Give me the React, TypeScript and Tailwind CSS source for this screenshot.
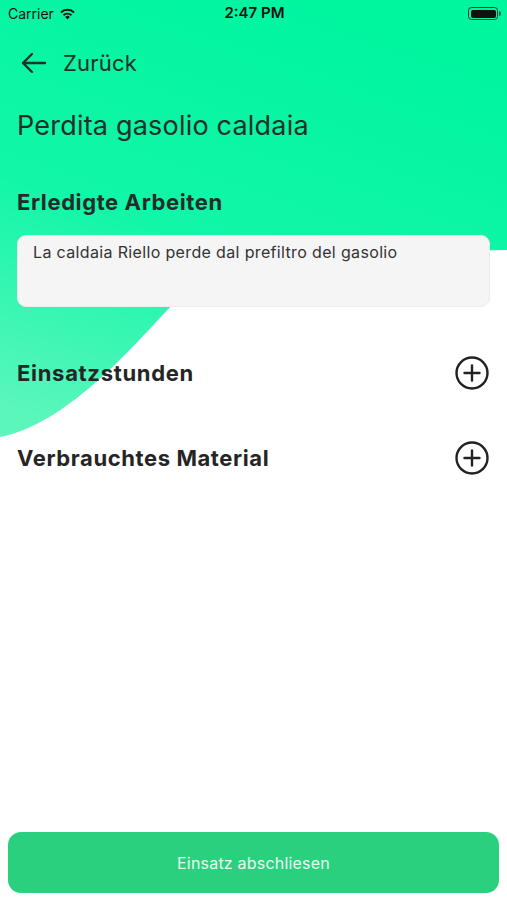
import React from "react";

function PlusCircle() {
  return (
    <svg width="36" height="36" viewBox="0 0 36 36" fill="none">
      <circle cx="18" cy="18" r="15.5" stroke="#222" strokeWidth="2.4" />
      <path d="M18 10.5v15M10.5 18h15" stroke="#222" strokeWidth="2.4" strokeLinecap="round" />
    </svg>
  );
}

export default function App() {
  return (
    <div
      className="relative w-[507px] h-[900px] overflow-hidden bg-white flex flex-col"
      style={{ fontFamily: "Inter, 'Noto Sans', sans-serif" }}
    >
      <svg
        className="absolute left-0 top-0 pointer-events-none"
        width="507"
        height="440"
        viewBox="0 0 507 440"
      >
        <defs>
          <linearGradient id="g" x1="0.6" y1="0" x2="0.2" y2="1">
            <stop offset="0" stopColor="#00f59f" />
            <stop offset="0.55" stopColor="#12f6a8" />
            <stop offset="1" stopColor="#5af6bc" />
          </linearGradient>
        </defs>
        <path
          d="M0 0H507V250C390 252 230 262 172 305C130 350 65 425 0 437Z"
          fill="url(#g)"
        />
      </svg>

      <div className="relative flex flex-col flex-1">
        {/* status bar */}
        <div className="h-[27px] flex items-center justify-between px-[8px] text-[#111]">
          <div className="flex items-center gap-[5px] w-[120px]">
            <span className="text-[14px]">Carrier</span>
            <svg width="17" height="12" viewBox="0 0 17 12">
              <path d="M8.5 11.5l-2.3-2.6a3.2 3.2 0 014.6 0z" fill="#111" />
              <path d="M3.9 6.5a6.6 6.6 0 019.2 0l-1.3 1.4a4.7 4.7 0 00-6.6 0z" fill="#111" />
              <path d="M1.3 3.8a10.3 10.3 0 0114.4 0l-1.3 1.4a8.4 8.4 0 00-11.8 0z" fill="#111" />
            </svg>
          </div>
          <span className="text-[15px] font-semibold">2:47 PM</span>
          <div className="w-[120px] flex justify-end -mr-[2px]">
            <div className="flex items-center">
              <div className="w-[30px] h-[13px] rounded-[3.5px] border border-[#333] p-[1.5px]">
                <div className="w-full h-full rounded-[2px] bg-[#111]" />
              </div>
              <div className="w-[2px] h-[5px] bg-[#555] rounded-r-sm ml-[1px]" />
            </div>
          </div>
        </div>

        {/* back */}
        <div className="flex items-center gap-[16px] pl-[20px] mt-[20px] h-[32px] text-[#23302a]">
          <svg width="27" height="22" viewBox="0 0 27 22" fill="none">
            <path d="M25 11H3M12 2L3 11l9 9" stroke="#23302a" strokeWidth="2.4" strokeLinecap="round" strokeLinejoin="round" />
          </svg>
          <span className="text-[22px] leading-none tracking-[0.2px]">Zurück</span>
        </div>

        <div className="pl-[17px] mt-[30px] text-[27px] leading-[34px] text-[#23302a] tracking-[0.2px]">
          Perdita gasolio caldaia
        </div>

        <div className="pl-[17px] mt-[45px] text-[22px] leading-[28px] font-bold text-[#252b28] tracking-[0.6px]">
          Erledigte Arbeiten
        </div>

        <div className="mx-[17px] w-[473px] mt-[19px] h-[72px] rounded-[9px] bg-[#f5f5f5] border border-[#ececec] px-[15px] pt-[4px] text-[16px] tracking-[0.35px] text-[#333]">
          La caldaia Riello perde dal prefiltro del gasolio
        </div>

        <div className="flex items-center justify-between pl-[17px] pr-[17px] mt-[48px] h-[36px]">
          <span className="text-[22px] font-bold text-[#252525] tracking-[0.7px]">Einsatzstunden</span>
          <PlusCircle />
        </div>

        <div className="flex items-center justify-between pl-[17px] pr-[17px] mt-[49px] h-[36px]">
          <span className="text-[22px] font-bold text-[#252525] tracking-[0.6px]">Verbrauchtes Material</span>
          <PlusCircle />
        </div>

        <div className="flex-1" />

        <div className="px-[8px] pb-[7px]">
          <div className="h-[61px] rounded-[13px] bg-[#2bd07e] flex items-center justify-center text-[16px] tracking-[0.2px] text-[#e6fff0]">
            Einsatz abschliesen
          </div>
        </div>
      </div>
    </div>
  );
}
